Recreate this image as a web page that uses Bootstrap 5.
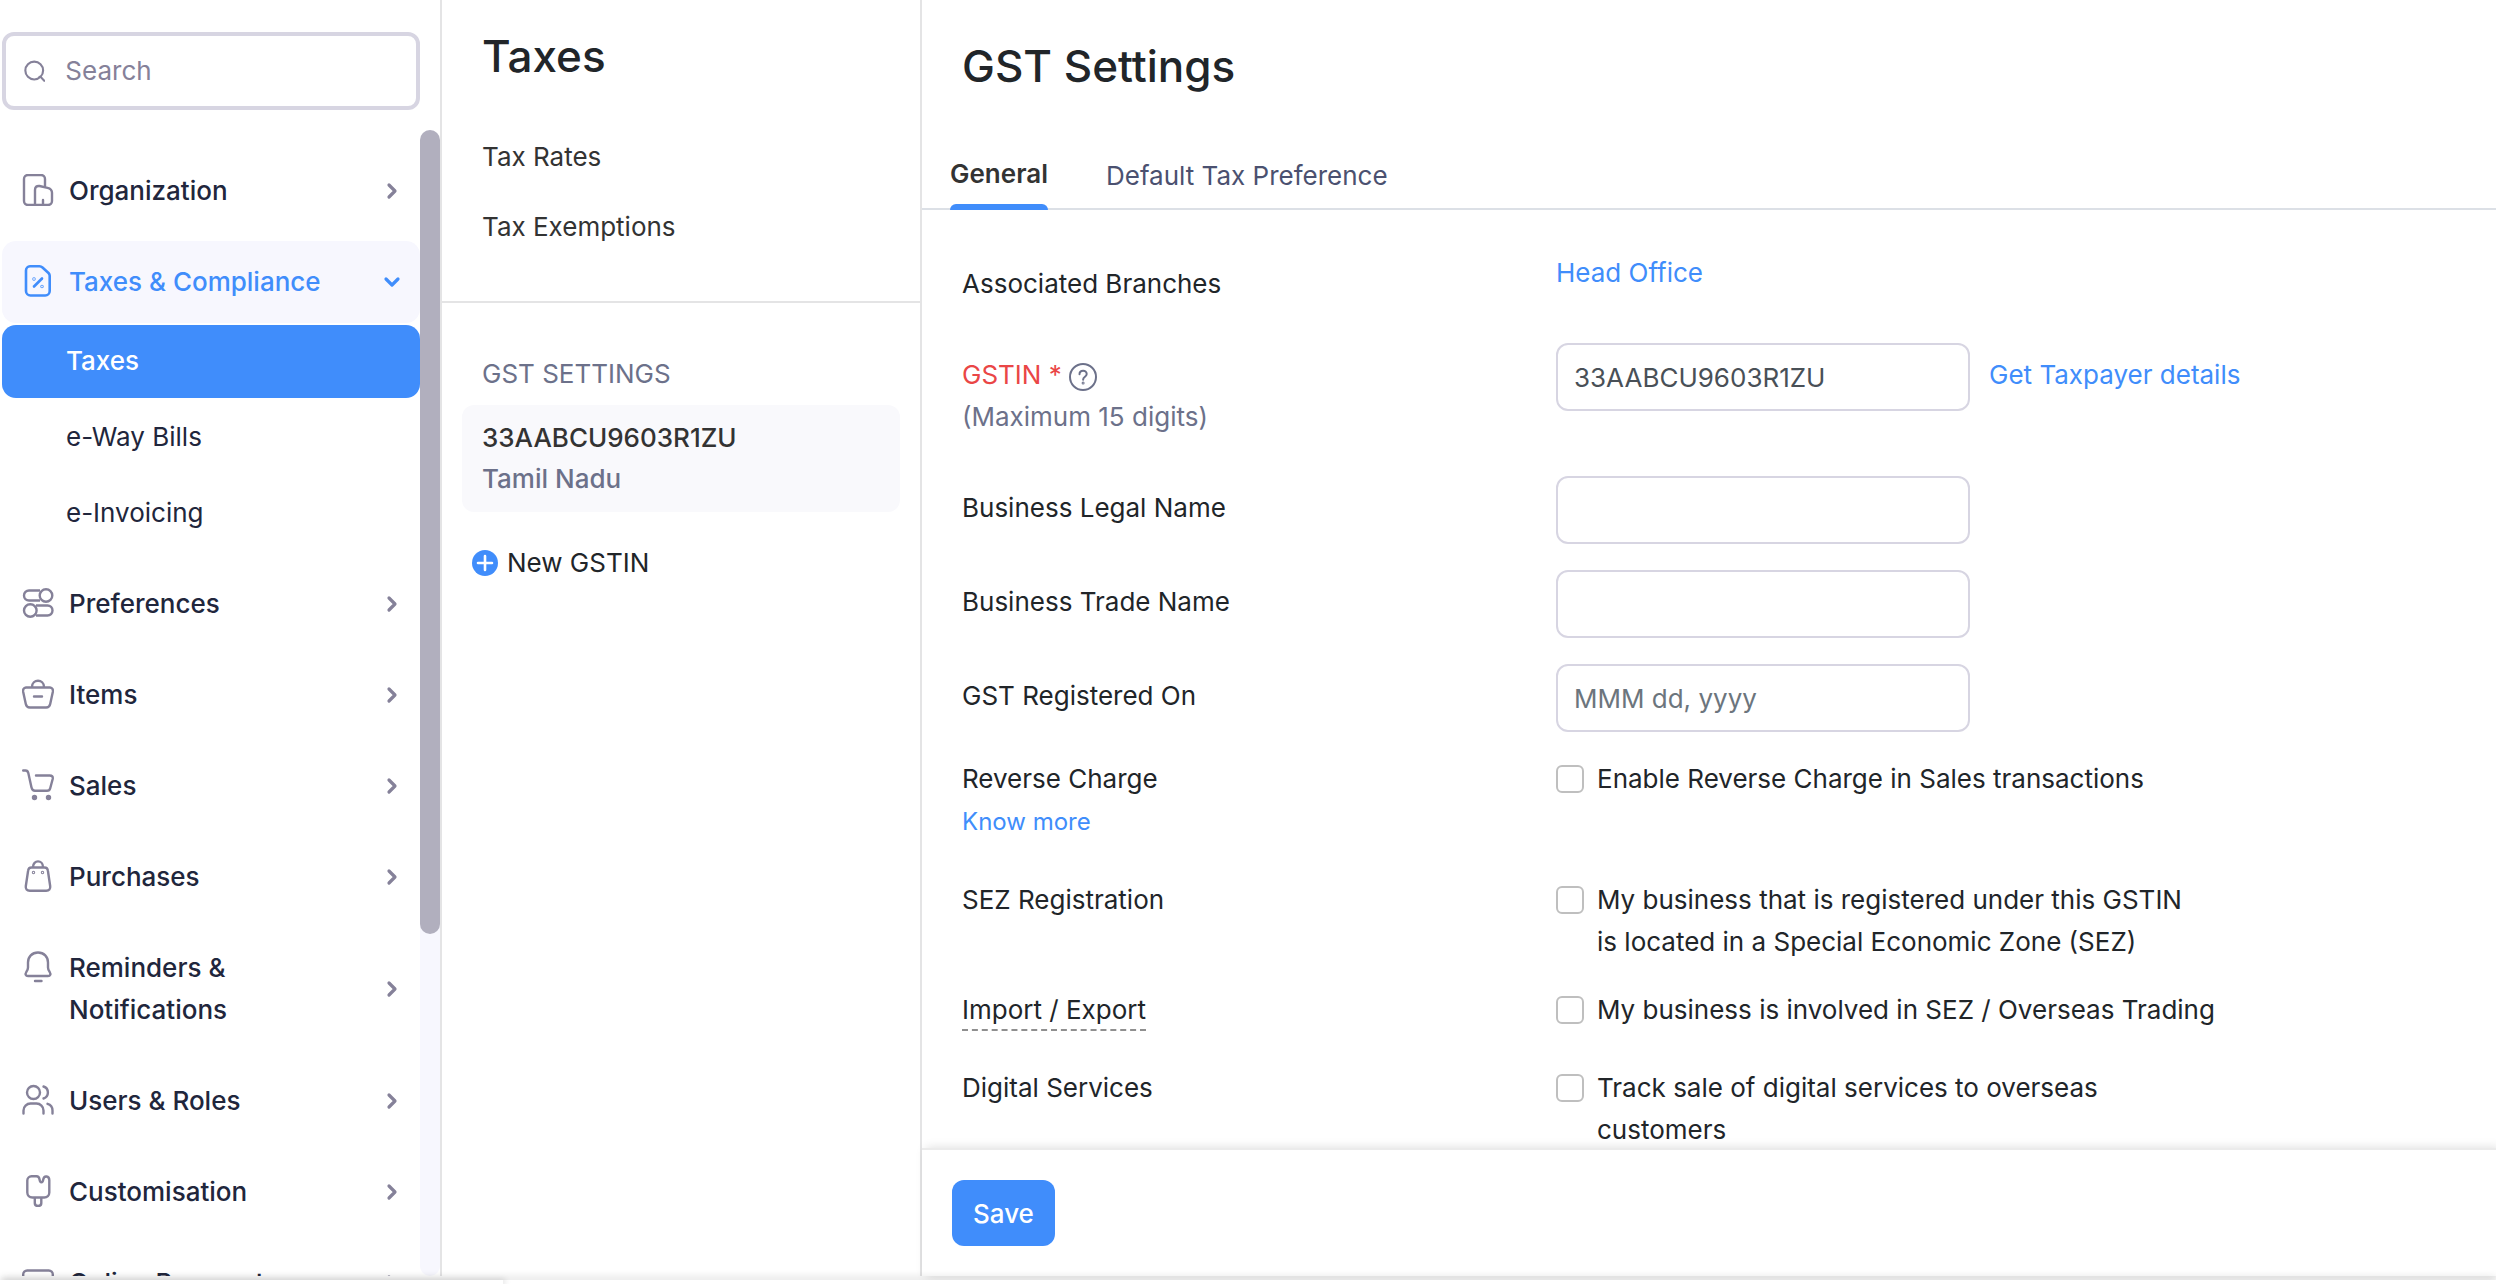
<!DOCTYPE html>
<html lang="en">
<head>
<meta charset="utf-8">
<meta name="viewport" content="width=device-width, initial-scale=1">
<title>GST Settings</title>
<link rel="stylesheet" href="https://cdn.jsdelivr.net/npm/bootstrap@5.3.0/dist/css/bootstrap.min.css">
<style>
:root{--ink:#21263c;--blue:#408dfb;--slate:#6c718a;--line:#e4e4e5;--edge:#d7d5e2;--icon:#858199}
body{font-family:Inter,"Liberation Sans",sans-serif;font-size:26px;line-height:42px;color:#212529}
a{color:var(--blue);text-decoration:none}
.app-body{min-height:0}
.app-rail{width:442px;border-right:2px solid var(--line)}
.search-box{margin:32px 20px 20px 2px;height:78px;border:4px solid var(--edge);border-radius:12px;padding:0 18px;gap:20px}
.search-box input{font-size:26px;line-height:42px;color:var(--ink)}
.search-box input::placeholder{color:#858199;opacity:1}
.rail-scroll{min-height:0}
.rail-nav{padding:20px 0 0 2px}
.rail-link{min-height:82px;padding:20px 18px 20px 20px;gap:15px;margin-bottom:9px;border-radius:14px;color:var(--ink);font-weight:500}
.rail-link svg{flex:none;color:var(--icon)}
.rail-link .go{width:20px;height:20px;margin-left:auto;align-self:center}
.rail-link .pic{width:32px;height:32px;margin-top:4px}
.rail-link.open{margin-bottom:2px;background:#f7f7fe;color:var(--blue)}
.rail-link.open svg{color:var(--blue)}
.rail-subs{margin-bottom:13px;gap:3px}
.rail-sub{padding:15px 64px;height:73px;border-radius:14px;color:var(--ink)}
.rail-sub.current{background:var(--blue);color:#fff;font-weight:500}
.rail-track{width:20px;background:#f7f7fe;border-radius:10px}
.rail-thumb{height:70.2%;background:#b1afbe;border-radius:10px}
.sub-rail{width:480px;border-right:2px solid var(--line)}
.page-title{font-size:44px;line-height:56px;font-weight:500;margin:0}
.sub-head{padding:28px 40px 53px;border-bottom:2px solid var(--line)}
.sub-head nav{margin-top:52px;gap:28px}
.sub-head a{color:#333}
.sub-caption{color:var(--slate);padding:50px 40px 10px}
.gstin-item{margin:0 20px;padding:12px 20px;border-radius:12px;background:#f9f9fc;height:107px;color:#333;font-weight:500;line-height:41px}
.new-gstin{margin:30px;gap:9px;color:#212529}
.main-side{min-width:0}
.main-head{padding:38px 40px 0}
.tab-bar{padding:61px 28px 0;gap:58px;border-bottom:2px solid #dce0e6;color:#4b5170}
.tab-bar button{border:0;background:none;padding:0 0 11px;color:inherit}
.tab-bar button.current{color:#333;font-weight:600;padding-bottom:15px;margin:-2px 0}
.tab-bar button.current::after{content:"";position:absolute;left:0;right:0;bottom:0;height:6px;background:var(--blue);border-radius:6px 6px 0 0}
.main-form{min-height:0;padding:42px 40px 0}
.form-line{margin-bottom:26px}
.form-line.far{margin-bottom:38px}
.form-line.mid{margin-bottom:36px}
.name-col{width:594px;flex:none}
.drop{padding-top:11px}
.get-link{margin-left:19px}
.red-name{color:#ea4646}
.hint-name{color:var(--slate)}
.more-link{font-size:24px}
.form-line .form-control{width:414px;height:68px;border:2px solid var(--edge);border-radius:12px;font-size:26px;line-height:42px;padding:0 16px;color:#495057}
.form-line .form-control::placeholder{color:#6c757d;opacity:1}
.form-line .form-check-input{width:28px;height:28px;flex:none;border:2px solid #bfbfbf;border-radius:6px;margin:7px 0 0}
.tick{gap:13px}
.dotted-name{border-bottom:2px dashed #8f8f8f;padding-bottom:4px}
.main-foot{height:128px;padding:30px;border-top:2px solid #ebebeb;box-shadow:4px 0 10px rgba(0,0,0,.14);background:#fff}
.main-foot .btn{background:var(--blue);border:0;height:66px;padding:0 21px;border-radius:12px;font-size:26px;font-weight:500;color:#fff}
.dock{height:4px;background:#fff;box-shadow:0 -2px 8px rgba(0,0,0,.18);margin-top:4px}
.dock-tab{width:503px;height:4px;box-shadow:2px 0 6px rgba(0,0,0,.2)}
</style>
</head>
<body>
<svg class="d-none">
<symbol id="go" viewBox="0 0 20 20"><path d="M7 4l6 6-6 6" fill="none" stroke="currentColor" stroke-width="3.2" stroke-linecap="round" stroke-linejoin="round"/></symbol>
</svg>
<div class="vh-100 d-flex flex-column overflow-hidden">
<div class="app-body d-flex flex-grow-1">

<aside class="app-rail d-flex flex-column flex-shrink-0">
<label class="search-box d-flex align-items-center flex-shrink-0">
<svg width="24" height="24" viewBox="0 0 24 24" fill="none" stroke="#858199" stroke-width="2.4" stroke-linecap="round"><circle cx="11.500" cy="11.500" r="10"/><path d="M17.500 18.500c1.500 0 2 .5 2.500 1.500l2.800 3"/></svg>
<input type="text" class="border-0 p-0 flex-grow-1 bg-transparent w-100" placeholder="Search" aria-label="Search">
</label>
<div class="rail-scroll d-flex flex-grow-1">
<nav class="rail-nav flex-grow-1 overflow-hidden">
<a href="#" class="rail-link d-flex"><svg class="pic" viewBox="0 0 32 32" fill="none" stroke="currentColor" stroke-width="2.4" stroke-linecap="round" stroke-linejoin="round"><path d="M12 31H6a4 4 0 0 1-4-4V5a4 4 0 0 1 4-4h13a4 4 0 0 1 4 4v7"/><path d="M13 31V16q0-4.500 4.500-4l8 1.800q4.500 1 4.500 5V27a4 4 0 0 1-4 4H12M21 30v-4"/></svg>Organization<svg class="go"><use href="#go"/></svg></a>
<a href="#" class="rail-link open d-flex"><svg class="pic" viewBox="0 0 32 32" fill="none" stroke="currentColor" stroke-width="2.600" stroke-linecap="round" stroke-linejoin="round"><path d="M8 1.300h9.500c1.200 0 2 .3 3 1.200l6 5.500c.8.8 1.200 1.700 1.200 2.800V26a4.500 4.500 0 0 1-4.500 4.500H8.500A4.500 4.500 0 0 1 4 26V5.500A4.200 4.200 0 0 1 8 1.300z"/><path d="M12 21.500l8-8"/><circle cx="12" cy="14" r=".4"/><circle cx="20" cy="21.500" r=".4"/></svg>Taxes &amp; Compliance<svg class="go" viewBox="0 0 20 20" fill="none" stroke="currentColor" stroke-width="3.200" stroke-linecap="round" stroke-linejoin="round"><path d="M4 7l6 6 6-6"/></svg></a>
<div class="rail-subs d-flex flex-column">
<a href="#" class="rail-sub current">Taxes</a>
<a href="#" class="rail-sub">e-Way Bills</a>
<a href="#" class="rail-sub">e-Invoicing</a>
</div>
<a href="#" class="rail-link d-flex"><svg class="pic" viewBox="0 0 32 32" fill="none" stroke="currentColor" stroke-width="2.400"><path d="M18 3.500H7a5 5 0 0 0 0 10h11M14 18.500h11.500a5 5 0 0 1 0 10H14"/><circle cx="24" cy="8.500" r="6.300"/><circle cx="8.300" cy="23.500" r="6.300"/></svg>Preferences<svg class="go"><use href="#go"/></svg></a>
<a href="#" class="rail-link d-flex"><svg class="pic" viewBox="0 0 32 32" fill="none" stroke="currentColor" stroke-width="2.400" stroke-linecap="round" stroke-linejoin="round"><path d="M4 9.500h24q3.500.500 2.800 4.500l-2.600 12q-.8 3.500-4 3.500H7.800q-3.200 0-4-3.500L1.200 14Q.5 10 4 9.500zM10 9C10 .6 22 .6 22 9M12 18.500h8"/></svg>Items<svg class="go"><use href="#go"/></svg></a>
<a href="#" class="rail-link d-flex"><svg class="pic" viewBox="0 0 32 32" fill="none" stroke="currentColor" stroke-width="2.400" stroke-linecap="round" stroke-linejoin="round"><path d="M1.200 1.500h2.300q2.200 0 2.800 2.500l3.200 14.500q.8 3.300 3.500 3.300h12q2.600 0 3.200-2.600L30.700 10q.6-3.500-3-3.500H14"/><circle cx="12.500" cy="28.500" r="1.500" fill="currentColor"/><circle cx="26.500" cy="28.500" r="1.500" fill="currentColor"/></svg>Sales<svg class="go"><use href="#go"/></svg></a>
<a href="#" class="rail-link d-flex"><svg class="pic" viewBox="0 0 32 32" fill="none" stroke="currentColor" stroke-width="2.400" stroke-linecap="round" stroke-linejoin="round"><path d="M9.500 7.500h13q3 0 3.400 3.200l2.300 15.500q.5 4.500-4 4.500H7.800q-4.500 0-4-4.500l2.300-15.500q.4-3.200 3.400-3.200zM11 7C11-.5 21-.5 21 7"/><circle cx="11.500" cy="12.500" r=".5"/><circle cx="20.500" cy="12.500" r=".5"/></svg>Purchases<svg class="go"><use href="#go"/></svg></a>
<a href="#" class="rail-link d-flex"><svg class="pic" viewBox="0 0 32 32" fill="none" stroke="currentColor" stroke-width="2.400" stroke-linecap="round" stroke-linejoin="round"><path d="M16 1.500c6 0 10 4.500 10 10v5c0 2 .6 2.800 1.700 4.500 1.400 2.300.6 4-1.700 4H6c-2.300 0-3.100-1.700-1.700-4C5.400 19.300 6 18.500 6 16.500v-5c0-5.500 4-10 10-10zM13 30h6.500"/></svg><span>Reminders &amp;<br>Notifications</span><svg class="go"><use href="#go"/></svg></a>
<a href="#" class="rail-link d-flex"><svg class="pic" viewBox="0 0 32 32" fill="none" stroke="currentColor" stroke-width="2.400" stroke-linecap="round" stroke-linejoin="round"><circle cx="11.500" cy="8.500" r="6.500"/><path d="M1.500 29.500v-3a7 7 0 0 1 7-7h6a7 7 0 0 1 7 7v3M21.500 2.500a6.300 6.300 0 0 1 0 12M25.500 19.800c3.500 1 5 3.500 5 6.700v3"/></svg>Users &amp; Roles<svg class="go"><use href="#go"/></svg></a>
<a href="#" class="rail-link d-flex"><svg class="pic" viewBox="0 0 32 32" fill="none" stroke="currentColor" stroke-width="2.400" stroke-linecap="round" stroke-linejoin="round"><path d="M9.500 1.300h5q2.500 0 3 3c.6 4 3.200 4 3.800 0 .8-4.300 6-3.500 6 1V17.500a5 5 0 0 1-5 5h-12a5 5 0 0 1-5-5V5.500a4.200 4.200 0 0 1 4.200-4.200zM12.800 23v5c0 4 6.500 4 6.500 0V23"/></svg>Customisation<svg class="go"><use href="#go"/></svg></a>
<a href="#" class="rail-link d-flex"><svg class="pic" viewBox="0 0 32 32" fill="none" stroke="currentColor" stroke-width="2.400"><rect x="1.200" y="4.500" width="29.600" height="25" rx="4"/><path d="M1 13h30"/></svg>Online Payments<svg class="go"><use href="#go"/></svg></a>
</nav>
<div class="rail-track flex-shrink-0"><div class="rail-thumb"></div></div>
</div>
</aside>

<section class="sub-rail flex-shrink-0">
<div class="sub-head">
<h2 class="page-title">Taxes</h2>
<nav class="d-flex flex-column"><a href="#">Tax Rates</a><a href="#">Tax Exemptions</a></nav>
</div>
<div class="sub-caption">GST SETTINGS</div>
<a href="#" class="gstin-item d-block">33AABCU9603R1ZU<span class="d-block hint-name">Tamil Nadu</span></a>
<a href="#" class="new-gstin d-flex align-items-center"><svg width="26" height="26" viewBox="0 0 26 26"><circle cx="13" cy="13" r="13" fill="#408dfb"/><path d="M13 6v14M6 13h14" stroke="#fff" stroke-width="2.600" stroke-linecap="round"/></svg>New GSTIN</a>
</section>

<main class="main-side d-flex flex-column flex-grow-1">
<header class="main-head"><h1 class="page-title">GST Settings</h1></header>
<div class="tab-bar d-flex" role="tablist">
<button type="button" role="tab" class="current position-relative">General</button>
<button type="button" role="tab">Default Tax Preference</button>
</div>
<form class="main-form flex-grow-1 overflow-hidden">
<div class="form-line far d-flex"><div class="name-col drop">Associated Branches</div><a href="#">Head Office</a></div>
<div class="form-line far d-flex"><div class="name-col drop"><label for="gstin" class="red-name">GSTIN *</label>
<svg width="28" height="28" viewBox="0 0 28 28" fill="none" stroke="#6c718a" stroke-width="2"><circle cx="14" cy="14" r="13"/><path d="M10.500 11.300c0-4.600 7.200-4.600 7.200-.3 0 2.800-3.600 2.700-3.600 5.700" stroke-linecap="round"/><circle cx="14.100" cy="20" r=".5"/></svg>
<div class="hint-name">(Maximum 15 digits)</div></div>
<input id="gstin" type="text" class="form-control" value="33AABCU9603R1ZU"><a href="#" class="get-link drop">Get Taxpayer details</a></div>
<div class="form-line d-flex"><label for="legal" class="name-col drop">Business Legal Name</label><input id="legal" type="text" class="form-control"></div>
<div class="form-line d-flex"><label for="trade" class="name-col drop">Business Trade Name</label><input id="trade" type="text" class="form-control"></div>
<div class="form-line d-flex"><label for="regdate" class="name-col drop">GST Registered On</label><input id="regdate" type="text" class="form-control" placeholder="MMM dd, yyyy"></div>
<div class="form-line mid d-flex"><div class="name-col">Reverse Charge<br><a href="#" class="more-link">Know more</a></div><div class="tick d-flex"><input id="rev" type="checkbox" class="form-check-input"><label for="rev">Enable Reverse Charge in Sales transactions</label></div></div>
<div class="form-line d-flex"><div class="name-col">SEZ Registration</div><div class="tick d-flex"><input id="sez" type="checkbox" class="form-check-input"><label for="sez">My business that is registered under this GSTIN<br>is located in a Special Economic Zone (SEZ)</label></div></div>
<div class="form-line mid d-flex"><div class="name-col"><span class="dotted-name">Import / Export</span></div><div class="tick d-flex"><input id="imp" type="checkbox" class="form-check-input"><label for="imp">My business is involved in SEZ / Overseas Trading</label></div></div>
<div class="form-line d-flex"><div class="name-col">Digital Services</div><div class="tick d-flex"><input id="dig" type="checkbox" class="form-check-input"><label for="dig">Track sale of digital services to overseas<br>customers</label></div></div>
</form>
<footer class="main-foot"><button type="button" class="btn">Save</button></footer>
</main>
</div>
<div class="dock position-relative flex-shrink-0"><div class="dock-tab"></div></div>
</div>
<script src="https://cdn.jsdelivr.net/npm/bootstrap@5.3.0/dist/js/bootstrap.bundle.min.js"></script>
</body>
</html>
